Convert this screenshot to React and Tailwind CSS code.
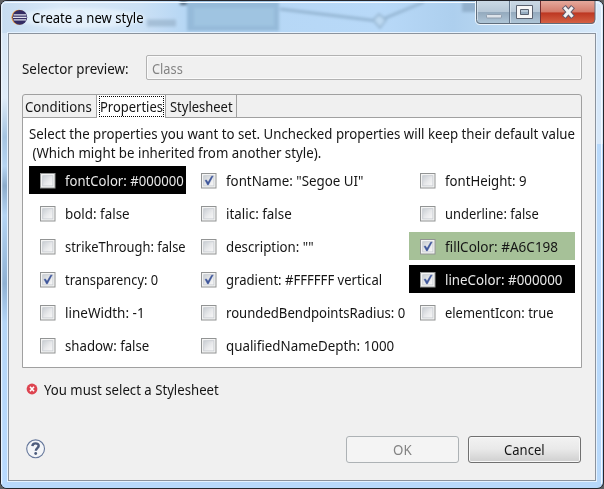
import { useLayoutEffect, useRef, useState } from "react";

// One line of text, condensed to the advance width of the dialog font.
function Label({ text, width, className = "" }) {
  const ref = useRef(null);
  const [scale, setScale] = useState(1);
  useLayoutEffect(() => {
    setScale(width / ref.current.offsetWidth);
  }, [text, width]);
  return (
    <span className={"block h-[19px] shrink-0 whitespace-pre leading-[19px] " + className} style={{ width }}>
      <span ref={ref} className="inline-block origin-left" style={{ transform: `scaleX(${scale})` }}>
        {text}
      </span>
    </span>
  );
}

function Check({ on }) {
  return (
    <svg width="16" height="16" viewBox="0 0 16 16" className="mt-px shrink-0">
      <defs>
        <linearGradient id="well" x1="0" y1="0" x2="1" y2="1">
          <stop offset="0" stopColor="#c9ced3" />
          <stop offset="0.55" stopColor="#e9eaec" />
          <stop offset="1" stopColor="#f8f8f8" />
        </linearGradient>
      </defs>
      <rect x="0.5" y="0.5" width="14.5" height="14.5" fill="#f4f4f4" stroke="#929494" />
      <rect x="2.7" y="2.7" width="10.2" height="10.2" fill="url(#well)" stroke="#c7cbd0" strokeWidth="0.8" />
      {on && <path d="M4 7.3 L5.6 6.9 L7 9.3 L10.5 3.2 L12.2 3 L7.4 12 L6.5 12 Z" fill="#3f579b" stroke="#3f579b" strokeWidth="0.4" />}
    </svg>
  );
}

const rows = [
  [["fontColor: #000000", 119, false, "bg-black text-[#e8e8e8]"], ["fontName: \"Segoe UI\"", 137, true], ["fontHeight: 9", 82, false]],
  [["bold: false", 65, false], ["italic: false", 66, false], ["underline: false", 94, false]],
  [["strikeThrough: false", 120.5, false], ["description: \"\"", 88, false], ["fillColor: #A6C198", 113, true, "bg-[#a6c198]"]],
  [["transparency: 0", 93.5, true], ["gradient: #FFFFFF vertical", 156, true], ["lineColor: #000000", 117, true, "bg-black text-[#e8e8e8]"]],
  [["lineWidth: -1", 80, false], ["roundedBendpointsRadius: 0", 179, false], ["elementIcon: true", 108, false]],
  [["shadow: false", 84, false], ["qualifiedNameDepth: 1000", 168.5, false], null],
];

function Property({ item }) {
  if (!item) return <div />;
  const [text, width, on, tone = ""] = item;
  return (
    <div className={"flex h-7 items-start pl-[11px] pt-[6px] " + tone}>
      <Check on={on} />
      <Label text={text} width={width} className="ml-[9px] mt-[-1px]" />
    </div>
  );
}

function Backdrop() {
  return (
    <svg className="absolute inset-0" width="602" height="487" viewBox="1 1 602 487">
      <defs>
        <linearGradient id="bar" x1="0" x2="1" y1="0" y2="0">
          <stop offset="0" stopColor="#c6dcf1" />
          <stop offset="0.1" stopColor="#d8e8f7" />
          <stop offset="0.23" stopColor="#cce1f5" />
          <stop offset="0.31" stopColor="#b5d6f4" />
          <stop offset="0.63" stopColor="#b8d9f8" />
          <stop offset="0.75" stopColor="#adcfee" />
          <stop offset="0.88" stopColor="#c2dcf2" />
          <stop offset="1" stopColor="#d9eafa" />
        </linearGradient>
        <linearGradient id="side" x1="0" x2="0" y1="0" y2="1">
          <stop offset="0" stopColor="#d3e5f6" />
          <stop offset="0.2" stopColor="#e0ecf8" />
          <stop offset="0.28" stopColor="#a5c4e1" />
          <stop offset="0.34" stopColor="#b7d5f2" />
          <stop offset="0.38" stopColor="#8caccb" />
          <stop offset="0.44" stopColor="#b5d5f4" />
          <stop offset="0.58" stopColor="#8fb1d3" />
          <stop offset="0.66" stopColor="#b5d6f7" />
          <stop offset="1" stopColor="#b8daff" />
        </linearGradient>
        <filter id="soft" x="-20%" y="-50%" width="140%" height="200%"><feGaussianBlur stdDeviation="1.8" /></filter>
      </defs>
      <rect x="0" y="0" width="604" height="489" fill="#b8d9fb" />
      <rect x="0" y="0" width="10" height="489" fill="url(#side)" />
      <rect x="594" y="30" width="10" height="114" fill="#d7e8f9" />
      <rect x="0" y="0" width="604" height="33" fill="url(#bar)" />
      <g filter="url(#soft)">
        <rect x="187" y="1" width="92" height="30" fill="#95bad9" />
        <rect x="194" y="8" width="80" height="18" fill="#9fc4e1" />
        <path d="M280 9 L378 21 L424 2" fill="none" stroke="#94b5d2" strokeWidth="2.8" />
        <path d="M373 20 L379 14 L386 20 L380 28 Z" fill="#bddaf3" stroke="#98b8d4" strokeWidth="2" />
        <rect x="462" y="2" width="15" height="10" fill="#92b0cd" />
        <rect x="180" y="1" width="7" height="4" fill="#52697f" />
        <ellipse cx="80" cy="18" rx="65" ry="10" fill="#eff6fd" opacity="0.6" />
        <path d="M147 23 H176" fill="none" stroke="#93adc6" strokeWidth="7" strokeOpacity="0.65" />
      </g>
      <path d="M1.7 484 V7 Q1.7 2.5 7 2.5 H596 Q601.5 2.5 601.5 8 V484" fill="none" stroke="#f3f9ff" strokeWidth="1" />
    </svg>
  );
}

function EclipseIcon() {
  return (
    <svg width="17" height="17" viewBox="0 0 17 17">
      <circle cx="7.9" cy="8.3" r="7.5" fill="#f29a3b" />
      <circle cx="8.8" cy="8.3" r="7.4" fill="#332c63" />
      <path d="M2.6 5.9 H15 M2 8.4 H15.6 M2.6 10.9 H15" stroke="#e0e1ee" strokeWidth="1.4" />
    </svg>
  );
}

function WindowButtons() {
  return (
    <svg width="122" height="25" viewBox="0 0 122 25">
      <defs>
        <linearGradient id="glass" x1="0" x2="0" y1="0" y2="1">
          <stop offset="0" stopColor="#cbd9e5" />
          <stop offset="0.46" stopColor="#b6c7d6" />
          <stop offset="0.48" stopColor="#94aabe" />
          <stop offset="1" stopColor="#b4cbdc" />
        </linearGradient>
        <linearGradient id="close" x1="0" x2="0" y1="0" y2="1">
          <stop offset="0" stopColor="#e5a99c" />
          <stop offset="0.45" stopColor="#d47c6c" />
          <stop offset="0.5" stopColor="#bd3722" />
          <stop offset="1" stopColor="#d9694b" />
        </linearGradient>
        <clipPath id="cluster"><path d="M1 0 H120 V19 Q120 23 116 23 H5 Q1 23 1 19 Z" /></clipPath>
      </defs>
      <path d="M0.5 0 V19 Q0.5 23.5 5 23.5 H116 Q121 23.5 121 19 V0" fill="none" stroke="#edf5fc" />
      <g clipPath="url(#cluster)">
        <rect width="65" height="24" fill="url(#glass)" />
        <rect x="65" width="57" height="24" fill="url(#close)" />
        <path d="M34.5 0 V24" stroke="#63758a" />
        <path d="M35.5 0 V24 M2.5 0 V24" stroke="#dce7f1" strokeOpacity="0.7" />
        <path d="M65.5 0 V24" stroke="#722f31" />
      </g>
      <path d="M1.5 0 V18.5 Q1.5 22.5 5 22.5 H116 Q120 22.5 120 18.5 V0" fill="none" stroke="#5f6d7c" />
      <rect x="11.5" y="13.5" width="15" height="3.5" rx="1" fill="#dde3ea" stroke="#8e9dae" />
      <path fillRule="evenodd" d="M41.5 4.5 H57.5 V17.5 H41.5 Z M45.5 8.5 V13.5 H53.5 V8.5 Z" fill="#f7f7f7" stroke="#59616f" />
      <path d="M88.8 5.6 L98 16.4 M98 5.6 L88.8 16.4" stroke="#62596a" strokeWidth="5.2" />
      <path d="M89.3 6.2 L97.5 15.8 M97.5 6.2 L89.3 15.8" stroke="#f2f2f3" strokeWidth="3" />
    </svg>
  );
}

export default function App() {
  return (
    <div className="h-[489px] w-[604px] overflow-hidden bg-[#5e6063] font-['Noto_Sans','Open_Sans',sans-serif] text-[14px] text-[#151515]">
      <div className="relative h-[489px] w-[604px] overflow-hidden rounded-[7px] border border-[#25262c]">
        <Backdrop />
        <div className="relative flex h-full flex-col px-[6px] pb-[6px]">
          <header className="flex h-[31px] shrink-0 items-start">
            <div className="ml-[4px] mt-[8px]"><EclipseIcon /></div>
            <Label text="Create a new style" width={112} className="ml-[4px] mt-[7px] text-black" />
            <div className="ml-auto"><WindowButtons /></div>
          </header>

          <main className="flex h-[450px] w-[590px] shrink-0 flex-col border border-[#e5f2ff]">
            <div className="flex h-full flex-col border border-[#8b939d] bg-[#f0f0f0] pl-[13px] pr-[13px]">
              <div className="mt-[21px] flex h-[25px] shrink-0 items-center">
                <Label text="Selector preview:" width={107} className="mt-[2px]" />
                <div className="ml-[17px] flex h-[25px] w-[436px] items-center rounded-[2px] border border-[#b2b2b2] shadow-[inset_0_0_0_1px_#fafafa]">
                  <Label text="Class" width={31} className="ml-[5px] mt-[1px] text-[#838383]" />
                </div>
              </div>

              <section className="mt-[14px] flex h-[274px] w-[560px] shrink-0 flex-col rounded-t-[3px] border border-[#a0a0a0]">
                <nav className="flex h-[23px] shrink-0">
                  <div className="flex w-[74px] border-r border-b border-[#a0a0a0] pl-[2px] pt-[2px]">
                    <Label text="Conditions" width={67} />
                  </div>
                  <div className="flex w-[69px] border-r border-[#a0a0a0] bg-white pl-[2px] pt-px">
                    <div className="h-[21px] w-[65px] border border-dotted border-black">
                      <Label text="Properties" width={63} />
                    </div>
                  </div>
                  <div className="flex w-[71px] border-r border-b border-[#a0a0a0] pl-[4px] pt-[2px]">
                    <Label text="Stylesheet" width={63} />
                  </div>
                  <div className="grow border-b border-[#a0a0a0]" />
                </nav>
                <div className="flex grow flex-col bg-white pl-[6px] pt-[6px]">
                  <Label text="Select the properties you want to set. Unchecked properties will keep their default value" width={546} />
                  <Label text=" (Which might be inherited from another style)." width={292} />
                  <div className="mt-[4px] grid grid-cols-[157px_215px_166px] gap-x-[4px] gap-y-[5px]">
                    {rows.flat().map((item, i) => (
                      <Property key={i} item={item} />
                    ))}
                  </div>
                </div>
              </section>

              <div className="mt-[12px] flex h-[19px] shrink-0 items-center">
                <svg width="12" height="12" viewBox="0 0 12 12" className="mb-px ml-[4px]">
                  <circle cx="6" cy="6" r="5.4" fill="#dd4450" />
                  <path d="M4 3.7 L8 8.3 M8 3.7 L4 8.3" stroke="#fff" strokeWidth="1.6" />
                </svg>
                <Label text="You must select a Stylesheet" width={175} className="ml-[6px]" />
              </div>

              <footer className="mt-[37px] flex h-[27px] shrink-0 items-center">
                <svg width="20" height="20" viewBox="0 0 20 20" className="mb-[2px] ml-[4px]">
                  <circle cx="9.6" cy="9.8" r="8.9" fill="#f3f5f8" stroke="#65779b" strokeWidth="1.1" />
                  <path d="M6.4 7.1 C6.5 3.4 12.8 3.5 12.7 6.9 C12.6 9.2 9.9 9.1 9.8 11.8" fill="none" stroke="#4d5c7c" strokeWidth="2.4" />
                  <circle cx="9.7" cy="14.5" r="1.4" fill="#4d5c7c" />
                </svg>
                <button className="ml-[300px] flex h-[27px] w-[113px] items-center justify-center rounded-[3px] border border-[#adb2b5] bg-[#f4f4f4]">
                  <Label text="OK" width={19} className="text-left text-[#838383]" />
                </button>
                <button className="ml-[9px] flex h-[27px] w-[113px] items-center justify-center rounded-[3px] border border-[#707070] bg-linear-to-b from-[#f2f2f2] from-0% via-[#e9e9e9] via-48% to-[#cfcfcf] shadow-[inset_0_0_0_1px_#f8f8f8]">
                  <Label text="Cancel" width={41} className="text-left" />
                </button>
              </footer>
            </div>
          </main>
        </div>
      </div>
    </div>
  );
}
